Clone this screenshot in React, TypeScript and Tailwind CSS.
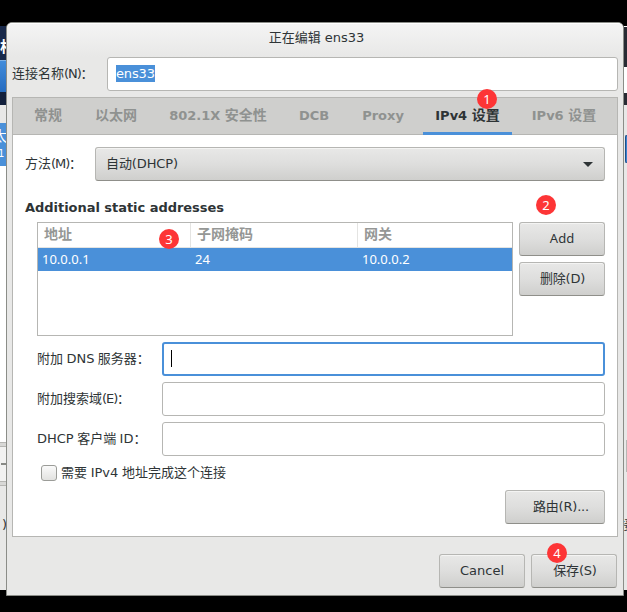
import React, { useState } from 'react';
import clsx from 'clsx';

const tabs = [
  { id: 'general', latin: '', name: '常规', width: 'w-[52px]' },
  { id: 'ethernet', latin: '', name: '以太网', width: 'w-[66px] ml-[9px]' },
  { id: '8021x', latin: '802.1X ', name: '安全性', width: 'w-[122px] ml-2' },
  { id: 'dcb', latin: 'DCB', name: '', width: 'w-[54px] ml-2' },
  { id: 'proxy', latin: 'Proxy', name: '', width: 'w-[66px] ml-[9px]' },
  { id: 'ipv4', latin: 'IPv4 ', name: '设置', width: 'w-[89px] ml-[7px]' },
  { id: 'ipv6', latin: 'IPv6 ', name: '设置', width: 'w-[88px] ml-2' },
];

const addresses = [{ address: '10.0.0.1', netmask: '24', gateway: '10.0.0.2' }];

const Button: React.FC<{ className?: string; children: React.ReactNode }> = ({ className, children }) => (
  <button
    className={clsx(
      'flex h-[34px] shrink-0 items-center justify-center whitespace-nowrap rounded-[3px] border border-[#b6b6b3] border-b-[#8f8f8a] bg-linear-to-b from-[#e8e8e7] via-[#dededd] to-[#cfcfcd] shadow-[inset_0_1px_0_#f4f4f3]',
      className,
    )}
  >
    {children}
  </button>
);

const Badge: React.FC<{ className: string; children: React.ReactNode }> = ({ className, children }) => (
  <span
    className={clsx(
      'absolute flex size-5 items-center justify-center rounded-full bg-[#fd3536] font-["Noto_Sans",sans-serif] text-[13px] leading-none text-white',
      className,
    )}
  >
    {children}
  </span>
);

const Label: React.FC<{ text: string; mnemonic?: string; className: string }> = ({ text, mnemonic, className }) => (
  <label className={clsx('shrink-0 whitespace-nowrap [word-spacing:-0.7px]', className)}>
    {text}
    {mnemonic && <span className="tracking-[-1.1px]">({mnemonic})</span>}：
  </label>
);

const Field: React.FC<{ label: string; mnemonic?: string; focused?: boolean }> = ({ label, mnemonic, focused }) => (
  <div className="flex h-[34px] items-center">
    <Label text={label} mnemonic={mnemonic} className="w-[125px]" />
    <div
      className={clsx(
        'flex h-full flex-1 items-center rounded-[3px] bg-white',
        focused ? 'border-2 border-[#4a90d9] pl-[7px]' : 'border border-[#b6b6b3]',
      )}
    >
      {focused && <span className="mb-0.5 h-[17px] w-px bg-black" />}
    </div>
  </div>
);

// 左侧露出的后方窗口
const LeftEdge: React.FC = () => (
  <div className="flex w-1.5 shrink-0 flex-col overflow-hidden pt-[26px] text-[14px] text-white">
    <div className="h-[34px] shrink-0 bg-[#19294a] pt-3 text-[15px] font-bold">
      <span>相</span>
    </div>
    <div className="h-8 shrink-0 border-t border-[#7db0e5] bg-linear-to-b from-[#418cdb] to-[#256bbf]" />
    <div className="h-[13px] shrink-0 bg-[#12203c]" />
    <div className="h-[18px] shrink-0 bg-[#e8e8e7]" />
    <div className="flex h-[43px] shrink-0 flex-col bg-[#4a90d9] pt-1 leading-[18px]">
      <span className="-ml-[7px]">太</span>
      <span className="-ml-0.5 text-[10px] whitespace-nowrap">1 0</span>
    </div>
    <div className="h-[276px] shrink-0 bg-white" />
    <div className="h-[5px] shrink-0 border-y border-[#b6b6b3] bg-[#d8d8d6]" />
    <div className="flex h-[34px] shrink-0 items-center justify-end bg-[#f2f2f1]">
      <span className="h-0.5 w-[5px] bg-[#888a85]" />
    </div>
    <div className="h-[5px] shrink-0 border-y border-[#b6b6b3] bg-[#d8d8d6]" />
    <div className="h-[104px] shrink-0 bg-[#e8e8e7] pt-[30px] text-[13px] text-[#2e3436]">
      <span className="ml-[2px]">)</span>
    </div>
  </div>
);

const RightEdge: React.FC = () => (
  <div className="flex w-[3px] shrink-0 flex-col overflow-hidden pt-[26px]">
    <div className="h-[41px] shrink-0 border-t border-white bg-[#272b33]" />
    <div className="h-[26px] shrink-0 bg-white" />
    <div className="h-3 shrink-0 bg-[#272b33]" />
    <div className="h-[277px] shrink-0 bg-[#e8e8e7] pt-[30px] pl-px">
      <div className="h-7 rounded-l-sm border border-r-0 border-[#1c4f8a] bg-[#3b83cf]" />
    </div>
    <div className="h-[58px] shrink-0 bg-[#e8e8e7]" />
    <div className="h-8 shrink-0 border-l-2 border-[#e8e8e7] bg-[#b6b6b3]" />
    <div className="h-[118px] shrink-0 bg-[#e8e8e7] pt-11 text-[13px] text-[#2e3436]">
      <span className="-ml-1">接</span>
    </div>
  </div>
);

const App: React.FC = () => {
  const [activeTab, setActiveTab] = useState('ipv4');

  return (
    <div className='relative flex h-[612px] w-[627px] overflow-hidden bg-black font-["DejaVu_Sans","Noto_Sans_CJK_SC",sans-serif] text-[13px] leading-[18px] text-[#2e3436]'>
      <LeftEdge />

      <div className="mt-[22px] flex h-[574px] w-[618px] shrink-0 flex-col rounded-t-[6px] border border-[#8b8d88] bg-[#e8e8e7] px-[5px]">
        <div className="-mx-[5px] h-[34px] shrink-0 rounded-t-[5px] border-t border-white bg-linear-to-b from-[#f4f4f4] to-[#e8e8e7] pt-[5px] pl-[3px] text-center">
          正在编辑 ens33
        </div>

        <div className="flex h-[34px] shrink-0 items-center">
          <Label text="连接名称" mnemonic="N" className="w-[95px]" />
          <div className="flex h-full flex-1 items-center rounded-[3px] border border-[#b6b6b3] bg-white pl-2">
            <span className="mb-px h-[17px] bg-[#4a90d9] leading-[17px] tracking-[-0.15px] text-white">ens33</span>
          </div>
        </div>

        <div className="mt-1.5 flex h-[440px] shrink-0 flex-col border border-[#b6b6b3] bg-white">
          <div className="flex h-[37px] shrink-0 border-b border-[#b6b6b3] bg-[#cfcfcd] pl-[9px] font-bold">
            {tabs.map((tab) => (
              <button
                key={tab.id}
                onClick={() => setActiveTab(tab.id)}
                className={clsx(
                  'flex h-[37px] shrink-0 items-center justify-center border-b-3 whitespace-pre',
                  tab.width,
                  activeTab === tab.id ? 'border-[#4a90d9]' : 'border-transparent text-[#8f9290]',
                )}
              >
                <span>
                  {tab.latin}
                  <span className="text-[14px]">{tab.name}</span>
                </span>
              </button>
            ))}
          </div>

          <div className="flex flex-col px-3 pt-3">
            <div className="flex items-center">
              <Label text="方法" mnemonic="M" className="w-[70px]" />
              <Button className="flex-1 justify-between! pr-[11px] pl-2.5 tracking-[-0.1px]">
                自动(DHCP)
                <svg width="10" height="5" viewBox="0 0 10 5">
                  <path d="M0 0h10L5 5z" fill="#2e3436" />
                </svg>
              </Button>
            </div>

            <h2 className="mt-[18px] h-[23px] font-bold tracking-[-0.04px]">Additional static addresses</h2>

            <div className="flex flex-col gap-1.5 pl-3">
              <div className="flex h-[114px] gap-1.5">
                <div className="flex-1 border border-[#b6b6b3] bg-white">
                  <div className="grid h-[25px] grid-cols-[153px_167px_1fr] border-b border-[#e4e4e2] text-[14px] font-bold text-[#959795]">
                    <span className="border-r border-[#e4e4e2] pt-0.5 pl-1.5">地址</span>
                    <span className="border-r border-[#e4e4e2] pt-0.5 pl-1.5">子网掩码</span>
                    <span className="pt-0.5 pl-1.5">网关</span>
                  </div>
                  {addresses.map((row) => (
                    <div
                      key={row.address}
                      className='grid h-[23px] grid-cols-[153px_167px_1fr] items-center bg-[#4a90d9] pb-0.5 pl-1 font-["Noto_Sans",sans-serif] text-white'
                    >
                      <span>{row.address}</span>
                      <span>{row.netmask}</span>
                      <span>{row.gateway}</span>
                    </div>
                  ))}
                </div>
                <div className="flex w-[86px] flex-col gap-1.5">
                  <Button className='pb-0.5 font-["Noto_Sans",sans-serif]'>Add</Button>
                  <Button className="pl-px tracking-[-0.2px]">删除(D)</Button>
                </div>
              </div>

              <Field label="附加 DNS 服务器" focused />
              <Field label="附加搜索域" mnemonic="E" />
              <Field label="DHCP 客户端 ID" />
            </div>

            <label className="mt-[7px] flex h-5 items-center gap-1 pl-4 [word-spacing:-0.5px]">
              <span className="size-4 rounded-[3px] border border-[#9b9c98] bg-linear-to-b from-[#fafafa] to-[#e2e2e0]" />
              需要 IPv4 地址完成这个连接
            </label>

            <Button className="mt-[7px] w-[100px] self-end pl-3 tracking-[-0.2px]">路由(R)...</Button>
          </div>
        </div>

        <div className="mt-[17px] mr-px flex shrink-0 justify-end gap-1.5">
          <Button className="w-[86px]">Cancel</Button>
          <Button className="w-[86px] pl-0.5 tracking-[-0.2px]">保存(S)</Button>
        </div>
      </div>

      <RightEdge />

      <Badge className="top-[89px] left-[477px]">1</Badge>
      <Badge className="top-[195px] left-[536px]">2</Badge>
      <Badge className="top-[229px] left-[159px]">3</Badge>
      <Badge className="top-[543px] left-[547px]">4</Badge>
    </div>
  );
};

export default App;
